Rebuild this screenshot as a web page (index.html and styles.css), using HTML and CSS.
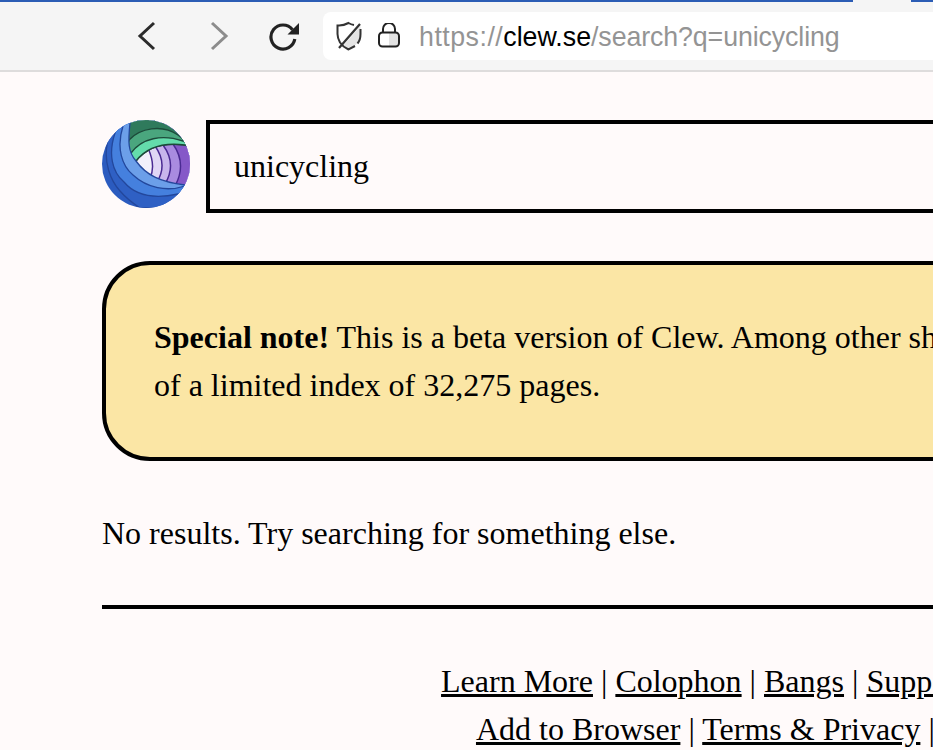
FILE: index.html
```html
<!DOCTYPE html>
<html lang="en">
<head>
<meta charset="utf-8">
<title>Clew</title>
<link rel="stylesheet" href="styles.css">
</head>
<body>
<header class="chrome">
  <div class="tabstrip"><span class="tab-a"></span><span class="tab-gap"></span><span class="tab-b"></span></div>
  <div class="toolbar">
    <svg class="nav-icon" width="24" height="32" viewBox="0 0 24 32"><path d="M19 3 5 16l14 13" fill="none" stroke="#2b2b2b" stroke-width="3"/></svg>
    <svg class="nav-icon forward" width="24" height="32" viewBox="0 0 24 32"><path d="M5 3l14 13L5 29" fill="none" stroke="#8c8c8c" stroke-width="3"/></svg>
    <svg class="nav-icon reload" width="32" height="32" viewBox="0 0 32 32"><path d="M24.500 9.700A12 12 0 1 0 26.800 19" fill="none" stroke="#222" stroke-width="3.200"/><path d="M31 3V14.500H19.500z" fill="#222"/></svg>
    <div class="urlbar">
      <svg class="shield" width="28" height="30" viewBox="0 0 28 30"><path d="M25.500 5V13q0 10-12 15.500-3-1.500-5.500-3.500z" fill="#e4e4e4"/><path d="M20 25l-6.500 3.500Q8 26 5 21.500 2.500 17 2.500 13V4.500Q8 5 13.500 2q2.500 1.500 5.500 2M25.500 8V13q0 6-3 9.500" fill="none" stroke="#333" stroke-width="2"/><path d="M4 27 25 3" stroke="#333" stroke-width="2.200"/></svg>
      <svg class="lock" width="24" height="26" viewBox="0 1 24 26"><rect x="12" y="11" width="9" height="13" fill="#e2e2e2"/><rect x="2" y="10.500" width="20" height="14" rx="3.500" fill="none" stroke="#222" stroke-width="2"/><path d="M6 10.500V7a6 6 0 0 1 12 0v3.500" fill="none" stroke="#222" stroke-width="2"/></svg>
      <span class="url"><span class="dim scheme">https://</span>clew.se<span class="dim path">/search?q=unicycling</span></span>
    </div>
  </div>
</header>
<main class="page">
  <form class="search">
    <svg class="logo" width="88" height="88" viewBox="0 0 88 88" aria-label="Clew logo">
      <defs>
        <clipPath id="ball"><circle cx="44" cy="44" r="44"/></clipPath>
        <clipPath id="core"><path d="M28 3C26 22 26 32 34 41 44 55 58 62 83 65L90 62V0H28z"/></clipPath>
      </defs>
      <g clip-path="url(#ball)" stroke="#23479c" stroke-width="1.300">
        <rect width="88" height="88" fill="#2b5bbf" stroke="none"/>
        <path d="M5 25C2 42 8 60 18 71 24 78 32 84 38 88H90V-2H5z" fill="#2f60c4"/>
        <path d="M13 13C6 34 10 52 22 62 32 74 48 80 76 74L90 68V-2H13z" fill="#4580de"/>
        <path d="M21 6C14 28 20 46 31 55 45 68 65 72 83 66L90 62V-2H21z" fill="#6c9fe9"/>
        <g clip-path="url(#core)">
          <rect width="90" height="90" fill="#f2f0fb" stroke="none"/>
          <g stroke="#4a2a92" stroke-width="1.500">
            <path d="M46 28Q54 46 48 58V90H90V-2H46z" fill="#e0d6f5"/>
            <path d="M53 26Q66 44 55 62V90H90V-2H53z" fill="#c8b5ec"/>
            <path d="M61 25Q75 44 63 64V90H90V-2H61z" fill="#a98be0"/>
            <path d="M71 24Q85 44 73 66V90H90V-2H71z" fill="#8558c8"/>
          </g>
          <g stroke="#1d4a3a" stroke-width="1.400">
            <path d="M20-2H90V29L83 25C60 22 44 28 34 41L20 43z" fill="#2f7a5c" stroke="none"/>
            <path d="M27 20C38 8 60 4 76 15L90 26V29L83 25C60 22 44 28 34 41L20 43z" fill="#4aa67e"/>
            <path d="M29 33C40 18 60 14 81 21L90 27 83 25C60 22 44 28 34 41L20 43z" fill="#64dcab"/>
          </g>
        </g>
        <path d="M28 3C26 22 26 32 34 41 44 55 58 62 83 65" fill="none"/>
      </g>
    </svg>
    <input class="query" type="text" value="unicycling" aria-label="Search">
  </form>
  <section class="note">
    <p><strong>Special note!</strong> This is a beta version of Clew. Among other shortcomings, results are drawn from a subset<br>of a limited index of 32,275 pages.</p>
  </section>
  <p class="empty">No results. Try searching for something else.</p>
  <hr class="rule">
  <footer class="links">
    <a href="#">Learn More</a> | <a href="#">Colophon</a> | <a href="#">Bangs</a> | <a href="#">Support</a> | <a href="#">Docs</a><br>
    <a href="#">Add to Browser</a> | <a href="#">Terms &amp; Privacy</a> | <a href="#">About</a>
  </footer>
</main>
</body>
</html>
```

FILE: styles.css
```css
html, body {
  margin: 0;
  height: 750px;
  overflow: hidden;
  background: #fffafa;
}

body {
  font-family: "Liberation Serif", "Times New Roman", serif;
  font-size: 32px;
  line-height: 48px;
  color: #000;
}

.chrome {
  background: #f5f5f5;
  border-bottom: 2px solid #dedcdc;
}

.tabstrip {
  display: flex;
  height: 2px;
  background: #2c5db5;
}

.tab-a { width: 853px; }
.tab-gap { width: 58px; background: #f5f5f5; }
.tab-b { flex: 1; }

.toolbar {
  display: flex;
  align-items: center;
  height: 68px;
  padding-left: 135px;
}

.nav-icon { flex: none; }
.forward { margin-left: 48px; }
.reload { margin-left: 37px; }

.urlbar {
  display: flex;
  align-items: center;
  flex: none;
  width: 800px;
  height: 48px;
  margin-left: 23px;
  padding-left: 12px;
  background: #fff;
  border-radius: 8px;
}

.shield { flex: none; }
.lock { flex: none; margin-left: 14px; }

.url {
  margin-left: 18px;
  padding-top: 2px;
  font-family: "Liberation Sans", Arial, sans-serif;
  font-size: 26.750px;
  line-height: 32px;
  color: #000;
  white-space: nowrap;
}

.dim { color: #949494; }
.scheme { letter-spacing: 0.5px; }
.path { letter-spacing: -0.1px; }

.page {
  box-sizing: border-box;
  width: 1395px;
  padding: 48px 0 0 102px;
}

.search {
  display: flex;
  align-items: flex-start;
  gap: 16px;
  margin: 0;
}

.logo { flex: none; }

.query {
  flex: 1;
  min-width: 0;
  box-sizing: border-box;
  height: 93px;
  padding: 0 24px;
  border: 4px solid #000;
  border-radius: 0;
  background: #fffafa;
  font: inherit;
  color: #000;
  outline: none;
}

.note {
  margin-top: 48px;
  padding: 48px;
  background: #fbe6a5;
  border: 4px solid #000;
  border-radius: 48px;
}

.note p { margin: 0; white-space: nowrap; }

.empty { margin: 48px 0 0; }

.rule {
  height: 4px;
  margin: 48px 0 0;
  border: 0;
  background: #000;
}

.links {
  margin-top: 48px;
  text-align: center;
  white-space: nowrap;
}

.links a { color: #000; }
```
